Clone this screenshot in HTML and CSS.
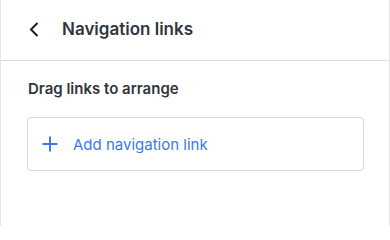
FILE: index.html
```html
<!DOCTYPE html>
<html>
<head>
<meta charset="utf-8">
<link rel="stylesheet" href="styles.css">
</head>
<body>
<div class="panel">
  <header class="header">
    <button class="back" aria-label="Back">
      <svg width="10" height="15" viewBox="0 0 10 15"><path d="M8.5 1 L2 7.5 L8.5 14" fill="none" stroke="#1b1d1f" stroke-width="2"/></svg>
    </button>
    <h1 class="title">Navigation links</h1>
  </header>
  <main class="content">
    <h2 class="label">Drag links to arrange</h2>
    <button class="add-card">
      <svg class="plus" width="16" height="16" viewBox="0 0 16 16"><path d="M8 0.5 V15.5 M0.5 8 H15.5" stroke="#3b78f0" stroke-width="2" fill="none"/></svg>
      <span class="add-text">Add navigation link</span>
    </button>
  </main>
</div>
</body>
</html>
```
FILE: styles.css
```css
* { box-sizing: border-box; }
html, body { margin: 0; padding: 0; background: #fff; }
body { font-family: Inter, "Noto Sans", sans-serif; }
.panel {
  width: 390px;
  height: 226px;
  border-left: 1px solid #e6e6e6;
  border-right: 1px solid #e6e6e6;
}
.header {
  height: 61px;
  border-bottom: 1px solid #dcdcdc;
  display: flex;
  align-items: center;
  padding-left: 28px;
  padding-bottom: 2px;
}
.back {
  border: 0;
  background: none;
  padding: 0;
  width: 10px;
  height: 15px;
  display: flex;
  margin-right: 23px;
}
.title {
  margin: 0;
  font-size: 17px;
  font-weight: 600;
  color: #30363c;
  letter-spacing: 0;
}
.content {
  padding: 18px 25px 0 26px;
}
.label {
  margin: 0;
  font-size: 15px;
  font-weight: 600;
  color: #30363c;
  padding-left: 1px;
}
.add-card {
  margin-top: 19px;
  width: 100%;
  height: 54px;
  border: 1px solid #dadada;
  border-radius: 4px;
  background: #fff;
  display: flex;
  align-items: center;
  padding: 0 0 0 14px;
  font-family: inherit;
}
.plus { margin-right: 15px; }
.add-text {
  font-size: 15px;
  color: #3b78f0;
}
```
